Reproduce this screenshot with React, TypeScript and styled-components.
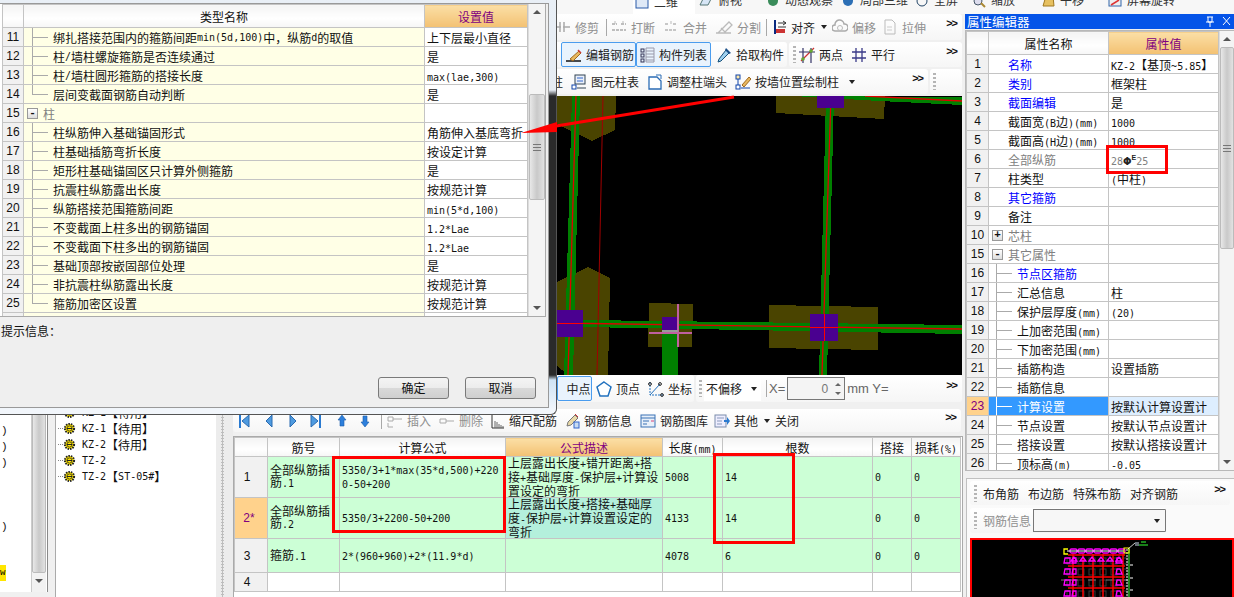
import React from "react";
import styled, { createGlobalStyle, css } from "styled-components";

const Global = createGlobalStyle`
  html, body { margin: 0; padding: 0; background: #f0f0f0; }
  body { font-family: "Noto Sans CJK SC", "Liberation Sans", sans-serif; font-size: 12px; color: #111; }
  * { box-sizing: border-box; }
`;

const Page = styled.div`position: relative; width: 1234px; height: 597px; overflow: hidden; background: #f0f0f0; display: flex; flex-direction: column;`;
const TopBar = styled.div`height: 14px; flex: none; overflow: hidden; background: #f7f7f7; display: flex; align-items: flex-start; padding-left: 633px; color: #333;`;
const TopItem = styled.div<{ $mr?: number; $active?: boolean }>`
  display: flex; align-items: center; gap: 5px; height: 16px; margin-top: -8px; margin-right: ${p => p.$mr ?? 8}px; white-space: nowrap; line-height: 16px;
  ${p => p.$active && css`background: #fff; padding: 8px 17px 8px 2px; height: 24px; margin-top: -10px;`}
`;
const Body = styled.div`flex: 1; display: flex; min-height: 0;`;
const Workspace = styled.div`width: 964px; flex: none; display: flex; flex-direction: column;`;
const ToolRow = styled.div<{ $h: number }>`height: ${p => p.$h}px; flex: none; display: flex; gap: 2px; padding: 0 2px 2px 0;`;
const Strip = styled.div<{ $w?: number; $pad?: number; $grow?: boolean; $h?: number }>`
  display: flex; align-items: center; background: linear-gradient(#fff, #f6f6f6); border-radius: 3px; white-space: nowrap; color: #222; overflow: hidden;
  ${p => p.$w ? `width:${p.$w}px;flex:none;` : ""}
  ${p => p.$grow ? "flex:1;" : ""}
  ${p => p.$h ? `height:${p.$h}px;flex:none;` : ""}
  padding-left: ${p => p.$pad ?? 0}px;
`;
const Item = styled.div<{ $mr?: number; $off?: boolean }>`display: flex; align-items: center; gap: 4px; margin-right: ${p => p.$mr ?? 8}px; color: ${p => p.$off ? "#8f8f8f" : "#1d1d1d"}; flex: none;`;
const OutlineBtn = styled.div<{ $mr?: number; $w: number }>`display: flex; align-items: center; gap: 3px; width: ${p => p.$w}px; height: 25px; padding-left: 3px; border: 1px solid #4a9cee; border-radius: 2px; background: #e9f3fd; margin-right: ${p => p.$mr ?? 0}px; flex: none;`;
const Sep = styled.div<{ $mr?: number }>`width: 1px; height: 17px; background: #a8a8a8; margin-right: ${p => p.$mr ?? 6}px; flex: none;`;
const Grip = styled.div<{ $mr?: number }>`width: 3px; height: 17px; margin-right: ${p => p.$mr ?? 6}px; flex: none; background: repeating-linear-gradient(#b5b5b5 0 2px, transparent 2px 4px);`;
const More = styled.div`margin-left: auto; margin-right: 5px; margin-bottom: 8px; font-size: 11px; font-weight: 700; font-family: "Liberation Sans", sans-serif; color: #111; letter-spacing: -1px;`;
const Caret = styled.i`display: inline-block; width: 0; height: 0; border: 3px solid transparent; border-top: 4px solid #222; border-bottom: 0; margin-left: 2px;`;
const CanvasBox = styled.div`height: 279px; flex: none; background: #000; margin-right: 2px; overflow: hidden; line-height: 0;`;
const OffsetBox = styled.div`width: 57px; height: 24px; display: flex; align-items: center; background: #fff; padding-left: 2px; margin-right: 5px; justify-content: space-between; padding-right: 4px; flex: none;`;
const SpinBox = styled.div`width: 58px; height: 23px; border: 1px solid #777; display: flex; align-items: center; justify-content: flex-end; background: #f4f4f4; color: #777; font-family: "Liberation Sans", sans-serif; font-size: 12px; flex: none; margin: 0 2px 0 2px; padding-right: 3px; gap: 7px;`;
const Spin = styled.div`display: flex; flex-direction: column; gap: 6px;`;
const Up = styled.i`display: block; width: 0; height: 0; border: 3px solid transparent; border-bottom: 3px solid #666; border-top: 0;`;
const Down = styled.i`display: block; width: 0; height: 0; border: 3px solid transparent; border-top: 3px solid #666; border-bottom: 0;`;
const SansText = styled.span`font-family: "Liberation Sans", sans-serif; font-size: 13px; color: #666;`;

const Lower = styled.div`flex: 1; min-height: 0; display: flex;`;
const ListPane = styled.div`width: 48px; flex: none; background: #fff; border-right: 1px solid #8a8a8a; margin-bottom: 5px; display: flex;`;
const ListCol = styled.div`flex: 1; padding-top: 19px; font-family: "Liberation Mono", monospace; font-size: 11px; line-height: 16px;`;
const ListMark = styled.div<{ $gap?: number; $hot?: boolean }>`
  margin-top: ${p => p.$gap ?? 0}px; padding-left: 1px; height: 16px;
  ${p => p.$hot && "color:#000;background:#ffe600;width:6px;padding:0;font-size:9px;"}
`;
const VBar = styled.div`width: 15px; flex: none; margin-right: 1px; background: #f2f2f2; border-left: 1px solid #ccc; display: flex; flex-direction: column; align-items: center;`;
const VThumb = styled.div<{ $h: number; $top?: number }>`width: 100%; height: ${p => p.$h}px; margin-top: ${p => p.$top ?? 0}px; background: linear-gradient(90deg, #e8e8e8, #c9c9c9 50%, #e2e2e2); border: 1px solid #bbb; border-radius: 2px; display: flex; align-items: center; justify-content: center; flex: none;`;
const VCaret = styled.i`display: block; width: 0; height: 0; margin: 6px auto; border: 4px solid transparent; border-top: 4px solid #555; border-bottom: 0;`;
const VCaretUp = styled.i`display: block; width: 0; height: 0; margin: 6px auto; border: 4px solid transparent; border-bottom: 4px solid #555; border-top: 0;`;
const GripLines = styled.div`width: 8px; height: 7px; background: repeating-linear-gradient(#777 0 1px, transparent 1px 3px);`;
const Spacer = styled.div`flex: 1;`;
const TreePane = styled.div`width: 161px; margin-left: 7px; flex: none; background: #fff; border-left: 1px solid #aaa; padding: 0 0 0 2px;`;
const TreeRow = styled.div`height: 16px; display: flex; align-items: center; white-space: nowrap;`;
const Dots = styled.span`width: 5px; border-top: 1px dotted #888; margin-right: 0; flex: none;`;
const Splitter = styled.div`width: 17px; flex: none; background-color: #ececec; background-image: radial-gradient(#bdbdbd 1px, transparent 1.2px); background-size: 3px 3px; background-position: 5px 0; background-repeat: repeat-y;`;
const EditorPane = styled.div`flex: 1; min-width: 0; display: flex; flex-direction: column;`;
const EditorBar = styled.div`height: 32px; flex: none; padding: 5px 3px 4px 0;`;
const EditorStrip = styled(Strip)`height: 23px; margin-right: 0; padding-left: 5px;`;
const BottomFrame = styled.div`flex: 1; min-height: 0; background: #fff; border: 1px solid #aaa; border-bottom: 0; margin-right: 1px; overflow: hidden;`;

const Table = styled.table`border-collapse: collapse; table-layout: fixed; border: 0; font-size: 12px;`;
const Th = styled.th<{ $w: number; $hot?: boolean; $h: number }>`
  width: ${p => p.$w}px; height: ${p => p.$h}px; padding: 0; border: 1px solid #c4c4c4; font-weight: 400; text-align: center; overflow: hidden; white-space: nowrap;
  background: ${p => p.$hot ? "linear-gradient(#fbdfa6,#f3c172)" : "linear-gradient(#f4f4f4,#fff 60%,#f6f6f6)"};
  color: ${p => p.$hot ? "#800080" : "#111"};
`;
const NumCell = styled.td<{ $h?: number; $hot?: boolean; $shift?: number }>`
  height: ${p => p.$h ?? 19}px; padding: 0 ${p => p.$shift ?? 0}px 0 0; border: 1px solid #c4c4c4; text-align: center; font-family: "Liberation Sans", sans-serif; font-size: 12px;
  background: ${p => p.$hot ? "#ffd28c" : "#f1f1f1"}; color: ${p => p.$hot ? "#800080" : "#111"}; overflow: hidden;
`;
const NameCell = styled.td<{ $sel?: boolean; $cream?: boolean }>`
  height: 19px; padding: 0; border: 1px solid #c4c4c4; overflow: hidden; white-space: nowrap;
  background: ${p => p.$sel ? "#3399ff" : p.$cream ? "#ffffe6" : "#fff"};
`;
const NameInner = styled.div<{ $gut: number }>`display: flex; align-items: center; height: 18px; padding-left: ${p => p.$gut}px;`;
const Branch = styled.div<{ $last?: boolean; $sel?: boolean }>`
  width: 21px; height: 18px; flex: none;
  background:
    linear-gradient(${p => p.$sel ? "#fff" : "#aaa"}, ${p => p.$sel ? "#fff" : "#aaa"}) left center / 16px 1px no-repeat,
    linear-gradient(${p => p.$sel ? "#fff" : "#aaa"}, ${p => p.$sel ? "#fff" : "#aaa"}) left top / 1px ${p => p.$last ? "50%" : "100%"} no-repeat;
`;
const ToggleBox = styled.span`width: 11px; height: 11px; border: 1px solid #999; background: linear-gradient(#fff, #ddd); flex: none; margin-right: 5px; display: flex; align-items: center; justify-content: center; color: #111; font-size: 11px; font-family: "Liberation Mono", monospace; font-weight: 700; line-height: 1;`;
const NameText = styled.span<{ $tone?: string }>`color: ${p => p.$tone ?? "#111"};`;
const ValueCell = styled.td<{ $sel?: boolean; $bg?: string }>`
  height: 19px; padding: 0 0 0 2px; border: 1px solid #c4c4c4; overflow: hidden; white-space: nowrap; background: ${p => p.$sel ? "#ddeeff" : p.$bg ?? "#fff"};
`;
const Latin = styled.span`font-family: "DejaVu Sans Mono", monospace; font-size: 10px;`;
const DataCell = styled.td<{ $bg?: string; $black?: boolean }>`
  padding: 0 2px; border: 1px solid #c4c4c4; background: ${p => p.$bg ?? "#fff"}; line-height: 12px; word-break: break-all; overflow: hidden; vertical-align: middle;
  ${p => p.$black && "border-left: 1px solid #000;"}
`;

const RightPanel = styled.div`width: 270px; flex: none; display: flex; flex-direction: column;`;
const TitleBar = styled.div`height: 15px; flex: none; background: #0554e8; color: #fff; font-size: 12.5px; line-height: 15px; display: flex; align-items: center; padding: 0 3px 0 2px; margin-left: 1px;`;
const PanelFrame = styled.div`height: 441px; flex: none; margin: 1px 0 0 1px; border: 1px solid #b8b8b8; border-right: 0; background: #fff; display: flex; overflow: hidden;`;
const GridBox = styled.div`flex: none; overflow: hidden;`;
const ScrollCol = styled.div<{ $w: number }>`width: ${p => p.$w}px; flex: none; background: #f4f4f4; border-left: 1px solid #ddd; display: flex; flex-direction: column;`;
const RebarPanel = styled.div`flex: 1; min-height: 0; margin: 7px 0 0 2px; border: 1px solid #c0c0c0; border-bottom: 0; border-right: 0; background: #fafafa; padding: 2px 0 0 3px; display: flex; flex-direction: column; gap: 3px;`;
const Select = styled.div`width: 133px; height: 23px; border: 1px solid #777; background: #f7f7f7; margin-left: 2px; display: flex; align-items: center; justify-content: flex-end; padding-right: 5px;`;
const RebarCanvas = styled.div`flex: 1; min-height: 0; margin-top: 2px; background: #000; border: 2px solid #f00; border-bottom: 0; overflow: hidden; line-height: 0;`;

const Dialog = styled.div`
  position: absolute; left: 0; top: 0; width: 557px; height: 415px; padding: 3px 7px 6px 0; border-radius: 0 0 6px 0; border-right: 1px solid #555; border-bottom: 1px solid #555;
  background: linear-gradient(#e9eff6 0, #e6ecf3 90px, #2a2a2a 96px, #2a2a2a 375px, #cfe3f5 380px, #f2f6fb 410px);
`;
const DialogBody = styled.div`height: 100%; background: #efefef; border: 1px solid #999; border-left: 0; display: flex; flex-direction: column;`;
const DialogGrid = styled.div`height: 313px; flex: none; margin-right: 2px; background: #fff; border-right: 1px solid #aaa; border-bottom: 1px solid #aaa; display: flex; overflow: hidden; padding-left: 2px;`;
const Hint = styled.div`flex: 1; padding: 6px 0 0 1px; line-height: 16px;`;
const DialogButtons = styled.div`display: flex; justify-content: flex-end; gap: 16px; padding: 0 12px 8px 0;`;
const DlgBtn = styled.div`width: 71px; height: 22px; border: 1px solid #7a7a7a; border-radius: 3px; background: linear-gradient(#f4f4f4 0, #ececec 50%, #d9d9d9 52%, #cfcfcf 100%); text-align: center; line-height: 20px; color: #111;`;

const Annotation = styled.div<{ $x: number; $y: number; $w: number; $h: number }>`position: absolute; left: ${p => p.$x}px; top: ${p => p.$y}px; width: ${p => p.$w}px; height: ${p => p.$h}px; border: 3px solid #f00; pointer-events: none;`;
const ArrowLayer = styled.svg`position: absolute; left: 0; top: 0; pointer-events: none;`;
const PhiMark = styled.b`color: #222; font-family: "DejaVu Sans", sans-serif; font-size: 10px;`;
const Sup = styled.sup`font-size: 7px; line-height: 0; color: #222; font-weight: 700; font-family: "Liberation Sans", sans-serif;`;
const IconSvg = styled.svg`flex: none;`;
const GearSvg = styled.svg`flex: none; margin-right: 6px;`;

const Txt = ({ t }: { t: string }) => (
  <>
    {t.split(/([\x20-\x7e]+)/).filter(Boolean).map((s, i) => /^[\x20-\x7e]+$/.test(s) ? <Latin key={i}>{s}</Latin> : <span key={i}>{s}</span>)}
  </>
);

const I = ({ children, w = 16 }: { children?: React.ReactNode; w?: number }) => (
  <IconSvg width={w} height={16} viewBox={`0 0 ${w} 16`} fill="none">{children}</IconSvg>
);
const Trim = () => <I><path d="M1 8h5M8 8h7M5 3v10M9 3v10" stroke="#aaa" strokeWidth="1.5" /></I>;
const BreakI = () => <I><path d="M1 5h5M10 5h5M1 11h14" stroke="#aaa" strokeWidth="1.5" strokeDasharray="3 1" /><path d="M4 2v3M12 2v3" stroke="#bbb" /></I>;
const MergeI = () => <I><path d="M2 5h4M10 5h4M2 11h12" stroke="#b5b5b5" strokeWidth="1.5" strokeDasharray="3 1" /><path d="M8 2v3" stroke="#bbb" /></I>;
const SplitI = () => <I w={18}><path d="M1 14h15M3 14L14 3l3 3-8 8M6 9l4 4" stroke="#bbb" strokeWidth="1.3" /></I>;
const AlignI = () => <I w={14}><path d="M2 1v14" stroke="#0a2a80" strokeWidth="2" /><path d="M5 4h8M5 8h8M10 2l3 2-3 2" stroke="#333" /><rect x="3" y="10" width="9" height="4" fill="#c33" /></I>;
const OffsetI = () => <I><path d="M3 12a3 3 0 0 1 0-6 4.500 4.500 0 0 1 9-1 3.500 3.500 0 0 1 1 7z" stroke="#aaa" strokeWidth="1.5" /><circle cx="8" cy="9" r="2.500" stroke="#bbb" /></I>;
const StretchI = () => <I><path d="M3 1h7l3 3v11H3z" stroke="#bbb" /><path d="M5 8h5M5 11h5" stroke="#ccc" /></I>;
const PencilI = () => <I w={18}><path d="M1 14h15" stroke="#111" strokeWidth="1.5" /><path d="M5 12l9-8 2 2-8 8z" fill="#e8b860" stroke="#a06a20" /><path d="M13 3l3 3" stroke="#c33" strokeWidth="1.5" /></I>;
const ListI = () => <I><rect x="1" y="2" width="3" height="3" stroke="#335" /><rect x="1" y="7" width="3" height="3" stroke="#335" /><rect x="1" y="12" width="3" height="3" stroke="#335" /><path d="M6 1h8v14H6zM6 4h8M6 7h8M6 10h8M6 13h8" stroke="#99a" /></I>;
const DropperI = () => <I><path d="M10 3l3 3-8 8-3 1 1-3z" fill="#9fd0ef" stroke="#15507a" /><path d="M10 1l5 5-2 1-4-4z" fill="#1a4f88" /></I>;
const TwoPointI = () => <I><path d="M2 14L15 1" stroke="#c33" strokeWidth="1.3" /><path d="M4 1v15M12 1v15M0 5h16" stroke="#336" strokeWidth="1.2" /><circle cx="4" cy="12" r="1.800" fill="#6a3" /><circle cx="12" cy="4" r="1.800" fill="#6a3" /></I>;
const ParallelI = () => <I><path d="M1 5h14M1 11h14M5 1v14M11 1v14" stroke="#3a3a88" strokeWidth="1.300" /></I>;
const TableI = () => <I><rect x="4" y="1" width="10" height="9" fill="#eaf0fa" stroke="#345" /><path d="M6 4h6M6 7h6" stroke="#36c" /><rect x="1" y="11" width="4" height="4" fill="#fff" stroke="#14a" /><path d="M6 14h9" stroke="#345" /></I>;
const AdjustI = () => <I><path d="M2 3h8l4 4v8H2z" fill="#fff" stroke="#2b6cb5" strokeWidth="1.300" /><path d="M9 1h5v4" stroke="#2b6cb5" /></I>;
const WallI = () => <I><rect x="1" y="1" width="4" height="4" fill="#ffe9a8" stroke="#14a" /><rect x="1" y="11" width="4" height="4" fill="#fff" stroke="#14a" /><path d="M3 5v6M6 14h9" stroke="#14a" /><path d="M7 11l7-8 2 2-7 8z" fill="#e8b860" stroke="#a06a20" /></I>;
const PentagonI = () => <I><path d="M8 1l7 5-3 9H4L1 6z" fill="#fff" stroke="#2272bf" strokeWidth="1.500" /></I>;
const CoordI = () => <I w={17}><path d="M3 1v13h13" stroke="#2272bf" strokeDasharray="2 1" /><path d="M3 14L13 3" stroke="#2272bf" /><circle cx="3" cy="3" r="1.400" stroke="#222" /><circle cx="13" cy="3" r="1.400" stroke="#222" /><circle cx="15" cy="14" r="1.400" stroke="#222" /></I>;
const NavFirst = () => <I w={12}><path d="M2 1v14" stroke="#2a7ad0" strokeWidth="2" /><path d="M11 2v12L4 8z" fill="#4f9be0" stroke="#2a6ab0" /></I>;
const NavPrev = () => <I w={10}><path d="M8 2v12L2 8z" fill="#4f9be0" stroke="#2a6ab0" /></I>;
const NavNext = () => <I w={10}><path d="M2 2v12l6-6z" fill="#4f9be0" stroke="#2a6ab0" /></I>;
const NavLast = () => <I w={12}><path d="M10 1v14" stroke="#2a7ad0" strokeWidth="2" /><path d="M1 2v12l7-6z" fill="#4f9be0" stroke="#2a6ab0" /></I>;
const UpI = () => <I w={10}><path d="M5 2l4 5H7v6H3V7H1z" fill="#2d7fdc" stroke="#1b5ca8" strokeWidth=".6" /></I>;
const DownI = () => <I w={10}><path d="M5 14l4-5H7V3H3v6H1z" fill="#2d7fdc" stroke="#1b5ca8" strokeWidth=".6" /></I>;
const InsertI = () => <I><path d="M1 4h5v4H1zM6 6h9M1 10v4h5" stroke="#aaa" /></I>;
const DeleteI = () => <I><path d="M1 6h6v4H1zM7 8h8" stroke="#aaa" /></I>;
const ScaleI = () => <I w={14}><path d="M1 2v13h12" stroke="#333" /><path d="M4 15V8M6 15V9M8 15v-4M10 15v-3M12 15v-2" stroke="#666" /></I>;
const InfoI = () => <I w={14}><path d="M1 13l4-1 7-7-3-3-7 7z" fill="#e9d9a8" stroke="#777" /><rect x="8" y="9" width="5" height="6" fill="#c7dbf2" stroke="#36c" /><path d="M9 1l3 3" stroke="#c33" /></I>;
const LibI = () => <I><rect x="1" y="2" width="14" height="12" fill="#e8f0fa" stroke="#3a72b5" /><path d="M1 5h14M3 8h6M3 11h4" stroke="#3a72b5" /><path d="M11 8h3" stroke="#d47" /></I>;
const OtherI = () => <I><rect x="1" y="2" width="11" height="12" fill="#eef" stroke="#7a8cab" /><path d="M3 5h7M3 8h5M3 11h5" stroke="#89b" /><path d="M10 7h3V4l3 4-3 4v-3h-3z" fill="#2a7ad0" /></I>;
const GearI = () => (
  <GearSvg width={13} height={13} viewBox="0 0 13 13">
    <circle cx="6.500" cy="6.500" r="4.600" fill="#ffe600" stroke="#222" strokeWidth="2" strokeDasharray="1.500 1" />
    <circle cx="6.500" cy="6.500" r="2.600" fill="#ffe600" stroke="#222" strokeWidth=".8" />
    <path d="M4 6.500h5" stroke="#222" />
  </GearSvg>
);

const Canvas = () => (
  <svg width={962} height={279} viewBox="0 96 962 279" shapeRendering="crispEdges">
    <g fill="#4a4400">
      <polygon points="540,96 616,96 615,130 592,141 557,124 540,118" />
      <polygon points="776,96 885,96 884,119 776,113" />
      <polygon points="540,290 588,267 610,278 608,375 568,375 540,352" />
      <polygon points="649,303 693,304 692,347 648,347" />
      <polygon points="769,305 878,307 878,350 769,348" />
    </g>
    <g fill="#008000">
      <polygon points="572,96 580,96 573,375 564,375" />
      <polygon points="826,96 834,96 827,375 819,375" />
      <rect x="662" y="333" width="16" height="42" />
      <polygon points="583,320 962,325 962,334 583,327" />
      <polygon points="793,96 962,97 962,105 880,101" />
    </g>
    <g stroke="#a00000" strokeWidth="1" shapeRendering="auto">
      <line x1="603" y1="96" x2="597" y2="375" />
    </g>
    <g stroke="#e00000" strokeWidth="1.300" shapeRendering="auto">
      <line x1="576" y1="96" x2="568" y2="375" />
      <line x1="831" y1="96" x2="822" y2="375" />
      <line x1="557" y1="323" x2="962" y2="329" />
      <line x1="865" y1="96" x2="962" y2="101" />
    </g>
    <g fill="#4a0090">
      <rect x="557" y="310" width="26" height="27" />
      <rect x="662" y="317" width="16" height="16" />
      <rect x="810" y="314" width="28" height="27" />
      <rect x="817" y="96" width="27" height="12" />
    </g>
    <g stroke="#f00" strokeWidth="1">
      <line x1="557" y1="323" x2="583" y2="323" />
      <line x1="810" y1="327" x2="838" y2="327" />
      <line x1="824" y1="314" x2="824" y2="341" />
    </g>
    <g fill="#c060a0">
      <rect x="677" y="304" width="2" height="43" />
      <rect x="649" y="332" width="43" height="2" />
    </g>
    <rect x="662" y="330" width="16" height="2" fill="#9a9a9a" />
  </svg>
);

const RebarDrawing = () => {
  const xs = [1072, 1082, 1092, 1102, 1112, 1122];
  const ys = [556, 567, 578, 589];
  return (
    <svg width={262} height={57} viewBox="971 540 262 57" fill="none">
      {[1070, 1081, 1092, 1103, 1114, 1125].map(x => ys.map(y => <rect key={`${x}${y}`} x={x - 4} y={y + 2} width={6} height={6} stroke="#3a3a3a" />))}
      <path d="M1060 580h6m3 0h8m10 0h8m10 0h8m6 0h8" stroke="#777" strokeWidth="1" />
      <g stroke="#f00" strokeWidth="1.500">
        {xs.map(x => <line key={x} x1={x} y1={554} x2={x} y2={597} />)}
        {[555, 566, 577, 588].map(y => <line key={y} x1={1067} y1={y} x2={1124} y2={y} />)}
      </g>
      <g stroke="#f0f" strokeWidth="1.300">
        {[1069, 1077, 1085, 1093, 1101, 1109, 1117].map(x => <rect key={x} x={x} y={549} width={7} height={4} rx={1.500} />)}
        {[1070, 1079, 1088, 1097, 1106, 1115].map(x => <path key={x} d={`M${x} 561l3-4 3 4z`} />)}
        {ys.map((y, i) => <path key={i} d={`M1069 ${y + 7}l-6 0 1-5 5 0zM1075 ${y + 7}l-4 0 1-5 3 0z`} />)}
        {ys.map((y, i) => <path key={i} d={`M1115 ${y + 7}l6 0-2-5-3 0z`} />)}
      </g>
      <path d="M1067 549h-4v5h4M1063 549" stroke="#ff0" strokeWidth="1.300" />
      <path d="M1066 551h57" stroke="#fff" strokeWidth="1" />
      <path d="M1126 549v48" stroke="#fff" strokeWidth="1" strokeDasharray="2 1" />
      <path d="M1128 549v48" stroke="#3f3" strokeWidth="1" />
      <rect x="1123" y="548" width="5" height="5" stroke="#ff0" />
      <path d="M1127 549l7-6" stroke="#fff" strokeWidth=".8" />
      <path d="M1134 543h4M1134 545h4" stroke="#cde" />
      <path d="M1140 542h5M1138 545h9" stroke="#3f3" />
      <path d="M1129 565h3M1129 578h3M1129 590h3" stroke="#fff" />
    </svg>
  );
};

const dialogRows: { n: number; name: string; val: string; last?: boolean; group?: boolean }[] = [
  { n: 11, name: "绑扎搭接范围内的箍筋间距min(5d,100)中，纵筋d的取值", val: "上下层最小直径" },
  { n: 12, name: "柱/墙柱螺旋箍筋是否连续通过", val: "是" },
  { n: 13, name: "柱/墙柱圆形箍筋的搭接长度", val: "max(lae,300)" },
  { n: 14, name: "层间变截面钢筋自动判断", val: "是", last: true },
  { n: 15, name: "柱", val: "", group: true },
  { n: 16, name: "柱纵筋伸入基础锚固形式", val: "角筋伸入基底弯折" },
  { n: 17, name: "柱基础插筋弯折长度", val: "按设定计算" },
  { n: 18, name: "矩形柱基础锚固区只计算外侧箍筋", val: "是" },
  { n: 19, name: "抗震柱纵筋露出长度", val: "按规范计算" },
  { n: 20, name: "纵筋搭接范围箍筋间距", val: "min(5*d,100)" },
  { n: 21, name: "不变截面上柱多出的钢筋锚固", val: "1.2*Lae" },
  { n: 22, name: "不变截面下柱多出的钢筋锚固", val: "1.2*Lae" },
  { n: 23, name: "基础顶部按嵌固部位处理", val: "是" },
  { n: 24, name: "非抗震柱纵筋露出长度", val: "按规范计算" },
  { n: 25, name: "箍筋加密区设置", val: "按规范计算", last: true },
];

type PropRow = { n: number; name: string; val?: string; tone?: string; kind?: "plus" | "minus" | "branch"; sel?: boolean; phi?: boolean };
const BLUE = "#0000ff";
const GREY = "#808080";
const propRows: PropRow[] = [
  { n: 1, name: "名称", val: "KZ-2【基顶~5.85】", tone: BLUE },
  { n: 2, name: "类别", val: "框架柱", tone: BLUE },
  { n: 3, name: "截面编辑", val: "是", tone: BLUE },
  { n: 4, name: "截面宽(B边)(mm)", val: "1000" },
  { n: 5, name: "截面高(H边)(mm)", val: "1000" },
  { n: 6, name: "全部纵筋", tone: GREY, phi: true },
  { n: 7, name: "柱类型", val: "(中柱)" },
  { n: 8, name: "其它箍筋", tone: BLUE },
  { n: 9, name: "备注" },
  { n: 10, name: "芯柱", tone: GREY, kind: "plus" },
  { n: 15, name: "其它属性", tone: GREY, kind: "minus" },
  { n: 16, name: "节点区箍筋", tone: BLUE, kind: "branch" },
  { n: 17, name: "汇总信息", val: "柱", kind: "branch" },
  { n: 18, name: "保护层厚度(mm)", val: "(20)", kind: "branch" },
  { n: 19, name: "上加密范围(mm)", kind: "branch" },
  { n: 20, name: "下加密范围(mm)", kind: "branch" },
  { n: 21, name: "插筋构造", val: "设置插筋", kind: "branch" },
  { n: 22, name: "插筋信息", kind: "branch" },
  { n: 23, name: "计算设置", val: "按默认计算设置计", kind: "branch", sel: true },
  { n: 24, name: "节点设置", val: "按默认节点设置计", kind: "branch" },
  { n: 25, name: "搭接设置", val: "按默认搭接设置计", kind: "branch" },
  { n: 26, name: "顶标高(m)", val: "-0.05", kind: "branch" },
];

const GREEN = "#ccffd6";
const rebars = [
  { n: "1", h: 41, id: "全部纵筋插筋.1", f: "5350/3+1*max(35*d,500)+2200-50+200", d: "上层露出长度+错开距离+搭接+基础厚度-保护层+计算设置设定的弯折", l: "5008", c: "14" },
  { n: "2*", h: 40, hot: true, id: "全部纵筋插筋.2", f: "5350/3+2200-50+200", d: "上层露出长度+搭接+基础厚度-保护层+计算设置设定的弯折", l: "4133", c: "14" },
  { n: "3", h: 34, id: "箍筋.1", f: "2*(960+960)+2*(11.9*d)", d: "", l: "4078", c: "6" },
];

export default function App() {
  return (
    <Page>
      <Global />
      <TopBar>
        <TopItem $active $mr={4}><I w={14}><rect x="1" y="2" width="12" height="12" fill="#dfe9f7" stroke="#2a5aa8" /></I>二维</TopItem>
        <TopItem $mr={24}><I w={14}><path d="M1 13l4-8h8l-4 8z" fill="#d7e6f6" stroke="#577" /></I>俯视</TopItem>
        <TopItem $mr={8}><I w={14}><circle cx="7" cy="9" r="5" fill="#3a8c5a" /></I>动态观察</TopItem>
        <TopItem $mr={7}><I w={14}><circle cx="7" cy="9" r="5" fill="#2c6fb5" /></I>局部三维</TopItem>
        <TopItem $mr={14}><I w={14}><circle cx="7" cy="9" r="5" stroke="#246" /></I>全屏</TopItem>
        <TopItem $mr={26}><I w={14}><circle cx="6" cy="9" r="4" fill="#dde" stroke="#456" /><path d="M9 11l4 4" stroke="#a83" strokeWidth="2" /></I>缩放</TopItem>
        <TopItem $mr={24}><I w={14}><path d="M2 14l3-10h7l1 10z" fill="#e6c060" stroke="#a07820" /></I>平移</TopItem>
        <TopItem><I w={14}><rect x="1" y="3" width="12" height="11" fill="#eee" stroke="#36a" /><path d="M3 13l8-5" stroke="#d33" strokeWidth="1.500" /></I>屏幕旋转</TopItem>
      </TopBar>
      <Body>
        <Workspace>
          <ToolRow $h={28}>
            <Strip $grow $pad={555}>
              <Item $off $mr={7}><Trim />修剪</Item>
              <Sep $mr={4} />
              <Item $off $mr={8}><BreakI />打断</Item>
              <Item $off $mr={8}><MergeI />合并</Item>
              <Item $off $mr={5}><SplitI />分割</Item>
              <Sep $mr={6} />
              <Item $mr={5}><AlignI />对齐<Caret /></Item>
              <Item $off $mr={6}><OffsetI />偏移</Item>
              <Item $off><StretchI />拉伸</Item>
              <More>&gt;&gt;</More>
            </Strip>
          </ToolRow>
          <ToolRow $h={27}>
            <Strip $w={787} $pad={561}>
              <OutlineBtn $w={75}><PencilI />编辑钢筋</OutlineBtn>
              <OutlineBtn $w={75} $mr={5}><ListI />构件列表</OutlineBtn>
              <Item><DropperI />拾取构件</Item>
            </Strip>
            <Strip $grow $pad={4}>
              <Grip $mr={3} />
              <Item $mr={8}><TwoPointI />两点</Item>
              <Item><ParallelI />平行</Item>
              <More>&gt;&gt;</More>
            </Strip>
          </ToolRow>
          <ToolRow $h={27}>
            <Strip $w={928} $pad={551}>
              <Item $mr={8}>柱</Item>
              <Item $mr={8}><TableI />图元柱表</Item>
              <Item $mr={8}><AdjustI />调整柱端头</Item>
              <Item $mr={8}><WallI />按墙位置绘制柱</Item>
              <Caret />
              <More>&gt;&gt;</More>
            </Strip>
            <Strip $grow $pad={3}><Grip /></Strip>
          </ToolRow>
          <CanvasBox><Canvas /></CanvasBox>
          <ToolRow $h={29}>
            <Strip $w={694} $pad={557}>
              <OutlineBtn $w={35} $mr={4}>&nbsp;&nbsp;中点</OutlineBtn>
              <Item $mr={7}><PentagonI />顶点</Item>
              <Item><CoordI />坐标</Item>
            </Strip>
            <Strip $grow $pad={3}>
              <Grip $mr={2} />
              <OffsetBox>不偏移<Caret /></OffsetBox>
              <Sep $mr={2} />
              <SansText>X=</SansText>
              <SpinBox>0<Spin><Up /><Down /></Spin></SpinBox>
              <SansText>mm Y=</SansText>
              <More>&gt;&gt;</More>
            </Strip>
          </ToolRow>
          <Lower>
            <ListPane>
              <ListCol>
                <ListMark>)</ListMark><ListMark>)</ListMark><ListMark>)</ListMark>
                <ListMark $gap={48}>)</ListMark>
                <ListMark $gap={30} $hot>w</ListMark>
              </ListCol>
              <VBar>
                <VThumb $h={169} />
                <VCaret />
              </VBar>
            </ListPane>
            <TreePane>
              {["KZ-1【待用】", "KZ-1【待用】", "KZ-2【待用】", "TZ-2", "TZ-2【ST-05#】"].map((t, i) => (
                <TreeRow key={i}><Dots /><GearI /><Txt t={t} /></TreeRow>
              ))}
            </TreePane>
            <Splitter />
            <EditorPane>
              <EditorBar>
                <EditorStrip>
                  <Item $mr={14}><NavFirst /></Item>
                  <Item $mr={14}><NavPrev /></Item>
                  <Item $mr={12}><NavNext /></Item>
                  <Item $mr={15}><NavLast /></Item>
                  <Item $mr={13}><UpI /></Item>
                  <Item $mr={11}><DownI /></Item>
                  <Sep $mr={5} />
                  <Item $off $mr={8}><InsertI />插入</Item>
                  <Item $off $mr={8}><DeleteI />删除</Item>
                  <Item $mr={9}><ScaleI />缩尺配筋</Item>
                  <Item $mr={8}><InfoI />钢筋信息</Item>
                  <Item $mr={6}><LibI />钢筋图库</Item>
                  <Item $mr={5}><OtherI />其他<Caret /></Item>
                  <Item>关闭</Item>
                  <More>&gt;&gt;</More>
                </EditorStrip>
              </EditorBar>
              <BottomFrame>
                <Table>
                  <thead>
                    <tr>
                      <Th $h={19} $w={33}></Th>
                      <Th $h={19} $w={72}>筋号</Th>
                      <Th $h={19} $w={166}>计算公式</Th>
                      <Th $h={19} $w={157} $hot>公式描述</Th>
                      <Th $h={19} $w={60}><Txt t="长度(mm)" /></Th>
                      <Th $h={19} $w={150}>根数</Th>
                      <Th $h={19} $w={39}>搭接</Th>
                      <Th $h={19} $w={49}><Txt t="损耗(%)" /></Th>
                    </tr>
                  </thead>
                  <tbody>
                    {rebars.map(r => (
                      <tr key={r.n}>
                        <NumCell $h={r.h} $hot={r.hot} $shift={r.hot ? 4 : 8}>{r.n}</NumCell>
                        <DataCell $bg={GREEN}><Txt t={r.id} /></DataCell>
                        <DataCell $bg={GREEN} $black><Txt t={r.f} /></DataCell>
                        <DataCell $bg={r.hot ? "#b4f0dc" : GREEN}><Txt t={r.d} /></DataCell>
                        <DataCell $bg={GREEN}><Txt t={r.l} /></DataCell>
                        <DataCell $bg={GREEN}><Txt t={r.c} /></DataCell>
                        <DataCell $bg={GREEN}><Txt t="0" /></DataCell>
                        <DataCell $bg={GREEN}><Txt t="0" /></DataCell>
                      </tr>
                    ))}
                    <tr>
                      <NumCell $shift={8}>4</NumCell>
                      <DataCell /><DataCell $black /><DataCell /><DataCell /><DataCell /><DataCell /><DataCell />
                    </tr>
                  </tbody>
                </Table>
              </BottomFrame>
            </EditorPane>
          </Lower>
        </Workspace>
        <RightPanel>
          <TitleBar>
            属性编辑器
            <Spacer />
            <svg width={28} height={13} viewBox="0 0 28 13" fill="none">
              <path d="M4 2h6M5 2v5h4V2M3 7h8M7 7v5" stroke="#fff" />
              <path d="M20 2l7 8M27 2l-7 8" stroke="#fff" />
            </svg>
          </TitleBar>
          <PanelFrame>
            <GridBox>
              <Table>
                <thead>
                  <tr>
                    <Th $h={23} $w={22}></Th>
                    <Th $h={23} $w={120}>属性名称</Th>
                    <Th $h={23} $w={110} $hot>属性值</Th>
                  </tr>
                </thead>
                <tbody>
                  {propRows.map(r => (
                    <tr key={r.n}>
                      <NumCell $hot={r.sel}>{r.n}</NumCell>
                      <NameCell $sel={r.sel}>
                        <NameInner $gut={r.kind === "branch" ? 7 : r.kind ? 3 : 19}>
                          {r.kind === "branch" && <Branch $sel={r.sel} />}
                          {r.kind === "plus" && <ToggleBox>+</ToggleBox>}
                          {r.kind === "minus" && <ToggleBox>-</ToggleBox>}
                          <NameText $tone={r.sel ? "#fff" : r.tone}><Txt t={r.name} /></NameText>
                        </NameInner>
                      </NameCell>
                      <ValueCell $sel={r.sel}>
                        {r.phi
                          ? <NameText $tone={GREY}><Latin>28</Latin><PhiMark>Φ</PhiMark><Sup>E</Sup><Latin>25</Latin></NameText>
                          : <Txt t={r.val ?? ""} />}
                      </ValueCell>
                    </tr>
                  ))}
                </tbody>
              </Table>
            </GridBox>
            <ScrollCol $w={15}>
              <VCaretUp />
              <VThumb $h={202}><GripLines /></VThumb>
              <Spacer />
              <VCaret />
            </ScrollCol>
          </PanelFrame>
          <RebarPanel>
            <Strip $w={260} $pad={4} $h={24}>
              <Grip />
              <Item $mr={9}>布角筋</Item>
              <Item $mr={9}>布边筋</Item>
              <Item $mr={9}>特殊布筋</Item>
              <Item>对齐钢筋</Item>
              <More>&gt;&gt;</More>
            </Strip>
            <Strip $w={196} $pad={4} $h={25}>
              <Grip />
              <Item $off $mr={0}>钢筋信息</Item>
              <Select><Caret /></Select>
            </Strip>
            <RebarCanvas><RebarDrawing /></RebarCanvas>
          </RebarPanel>
        </RightPanel>
      </Body>

      <Dialog>
        <DialogBody>
          <DialogGrid>
            <GridBox>
              <Table>
                <thead>
                  <tr>
                    <Th $h={23} $w={21}></Th>
                    <Th $h={23} $w={401}>类型名称</Th>
                    <Th $h={23} $w={103} $hot>设置值</Th>
                  </tr>
                </thead>
                <tbody>
                  {dialogRows.map(r => (
                    <tr key={r.n}>
                      <NumCell>{r.n}</NumCell>
                      <NameCell $cream>
                        <NameInner $gut={r.group ? 3 : 8}>
                          {r.group
                            ? <><ToggleBox>-</ToggleBox><NameText $tone={GREY}>{r.name}</NameText></>
                            : <><Branch $last={r.last} /><Txt t={r.name} /></>}
                        </NameInner>
                      </NameCell>
                      <ValueCell><Txt t={r.val} /></ValueCell>
                    </tr>
                  ))}
                  <tr>
                    <NumCell /><NameCell $cream /><ValueCell />
                  </tr>
                </tbody>
              </Table>
            </GridBox>
            <ScrollCol $w={17}>
              <VCaretUp />
              <VThumb $h={106} $top={74}><GripLines /></VThumb>
              <Spacer />
              <VCaret />
            </ScrollCol>
          </DialogGrid>
          <Hint>提示信息：</Hint>
          <DialogButtons>
            <DlgBtn>确定</DlgBtn>
            <DlgBtn>取消</DlgBtn>
          </DialogButtons>
        </DialogBody>
      </Dialog>

      <Annotation $x={332} $y={456} $w={174} $h={77} />
      <Annotation $x={713} $y={453} $w={82} $h={91} />
      <Annotation $x={1106} $y={145} $w={62} $h={29} />
      <ArrowLayer width={1234} height={597} viewBox="0 0 1234 597">
        <polygon points="521,133 557,122 557,132" fill="#f00" />
        <line x1="550" y1="127" x2="734" y2="97" stroke="#f00" strokeWidth="3" />
      </ArrowLayer>
    </Page>
  );
}
